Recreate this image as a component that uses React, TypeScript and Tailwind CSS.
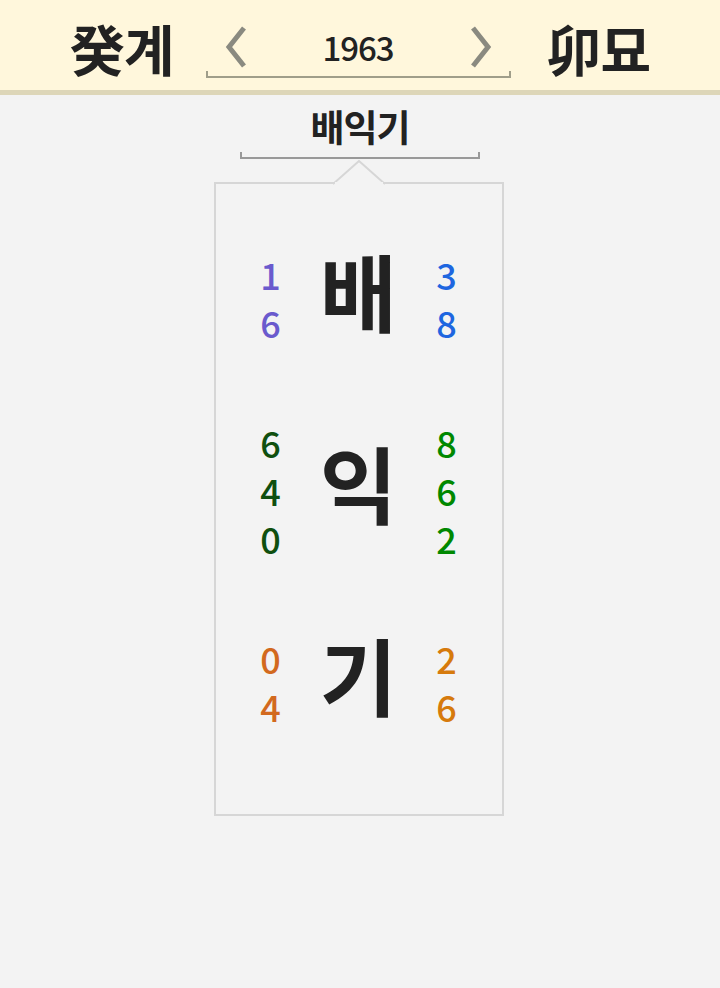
import React from "react";

const FONT = { fontFamily: '"Noto Sans CJK KR", "Noto Sans", sans-serif' };

type Row = {
  syllable: string;
  left: string[];
  right: string[];
  leftColor: string;
  rightColor: string;
};

const rows: Row[] = [
  { syllable: "배", left: ["1", "6"], right: ["3", "8"], leftColor: "text-[#6a5acd]", rightColor: "text-[#1e66e0]" },
  { syllable: "익", left: ["6", "4", "0"], right: ["8", "6", "2"], leftColor: "text-[#0f4f0f]", rightColor: "text-[#008800]" },
  { syllable: "기", left: ["0", "4"], right: ["2", "6"], leftColor: "text-[#d2691e]", rightColor: "text-[#d67a0c]" },
];

function Chevron({ dir }: { dir: "left" | "right" }) {
  return (
    <svg width="24" height="44" viewBox="0 0 24 44" className="shrink-0">
      <polyline
        points={dir === "left" ? "20,3 5,22 20,41" : "4,3 19,22 4,41"}
        fill="none"
        stroke="#8a8a80"
        strokeWidth="5"
      />
    </svg>
  );
}

function Numbers({ items, color }: { items: string[]; color: string }) {
  return (
    <div className={`w-[40px] flex flex-col items-center text-[36px] font-medium leading-[48px] ${color}`}>
      {items.map((n, i) => (
        <span key={i}>{n}</span>
      ))}
    </div>
  );
}

export default function App() {
  return (
    <div className="min-h-[988px] bg-[#f3f3f3]" style={FONT}>
      <header className="h-[95px] bg-[#fff7dc] border-b-[5px] border-[#ddd6b8] flex items-start justify-center pt-[12px]">
        <span className="mt-[8px] text-[55px] font-bold text-[#222] leading-none tracking-[-1px] mr-[32px]">癸계</span>
        <div className="relative w-[305px] h-[66px]">
          <div className="absolute inset-x-0 top-[13px] flex items-center justify-between px-[18px]">
            <Chevron dir="left" />
            <span className="text-[33px] font-medium text-[#222] leading-none tracking-[-1px]">1963</span>
            <Chevron dir="right" />
          </div>
          <div className="absolute inset-x-0 bottom-0 h-[7px] border-x-2 border-b-2 border-[#a09e8a]" />
        </div>
        <span className="mt-[8px] text-[55px] font-bold text-[#222] leading-none tracking-[-1px] ml-[36px]">卯묘</span>
      </header>

      <div className="flex flex-col items-center">
        <div className="mt-[6px] text-[37px] font-bold text-[#222] leading-[50px] tracking-[-1px]">배익기</div>
        <div className="w-[240px] h-[7px] border-x-2 border-b-2 border-[#999] mt-[1px]" />

        <div className="relative mt-[23px] mr-[3px] w-[290px] h-[634px] border-2 border-[#d6d6d6] pt-[18px]">
          <svg
            width="52"
            height="26"
            viewBox="0 0 52 26"
            className="absolute left-[117px] top-[-24px]"
          >
            <polyline points="0,24 26,1 52,24" fill="#f3f3f3" stroke="#d6d6d6" strokeWidth="2" />
            <rect x="2" y="22" width="48" height="4" fill="#f3f3f3" />
          </svg>
          {rows.map((r) => (
            <div key={r.syllable} className="h-[192px] flex items-center justify-center gap-[20px]">
              <Numbers items={r.left} color={r.leftColor} />
              <span className="w-[96px] mb-[16px] text-center text-[84px] font-bold text-[#222] leading-none">
                {r.syllable}
              </span>
              <Numbers items={r.right} color={r.rightColor} />
            </div>
          ))}
        </div>
      </div>
    </div>
  );
}
